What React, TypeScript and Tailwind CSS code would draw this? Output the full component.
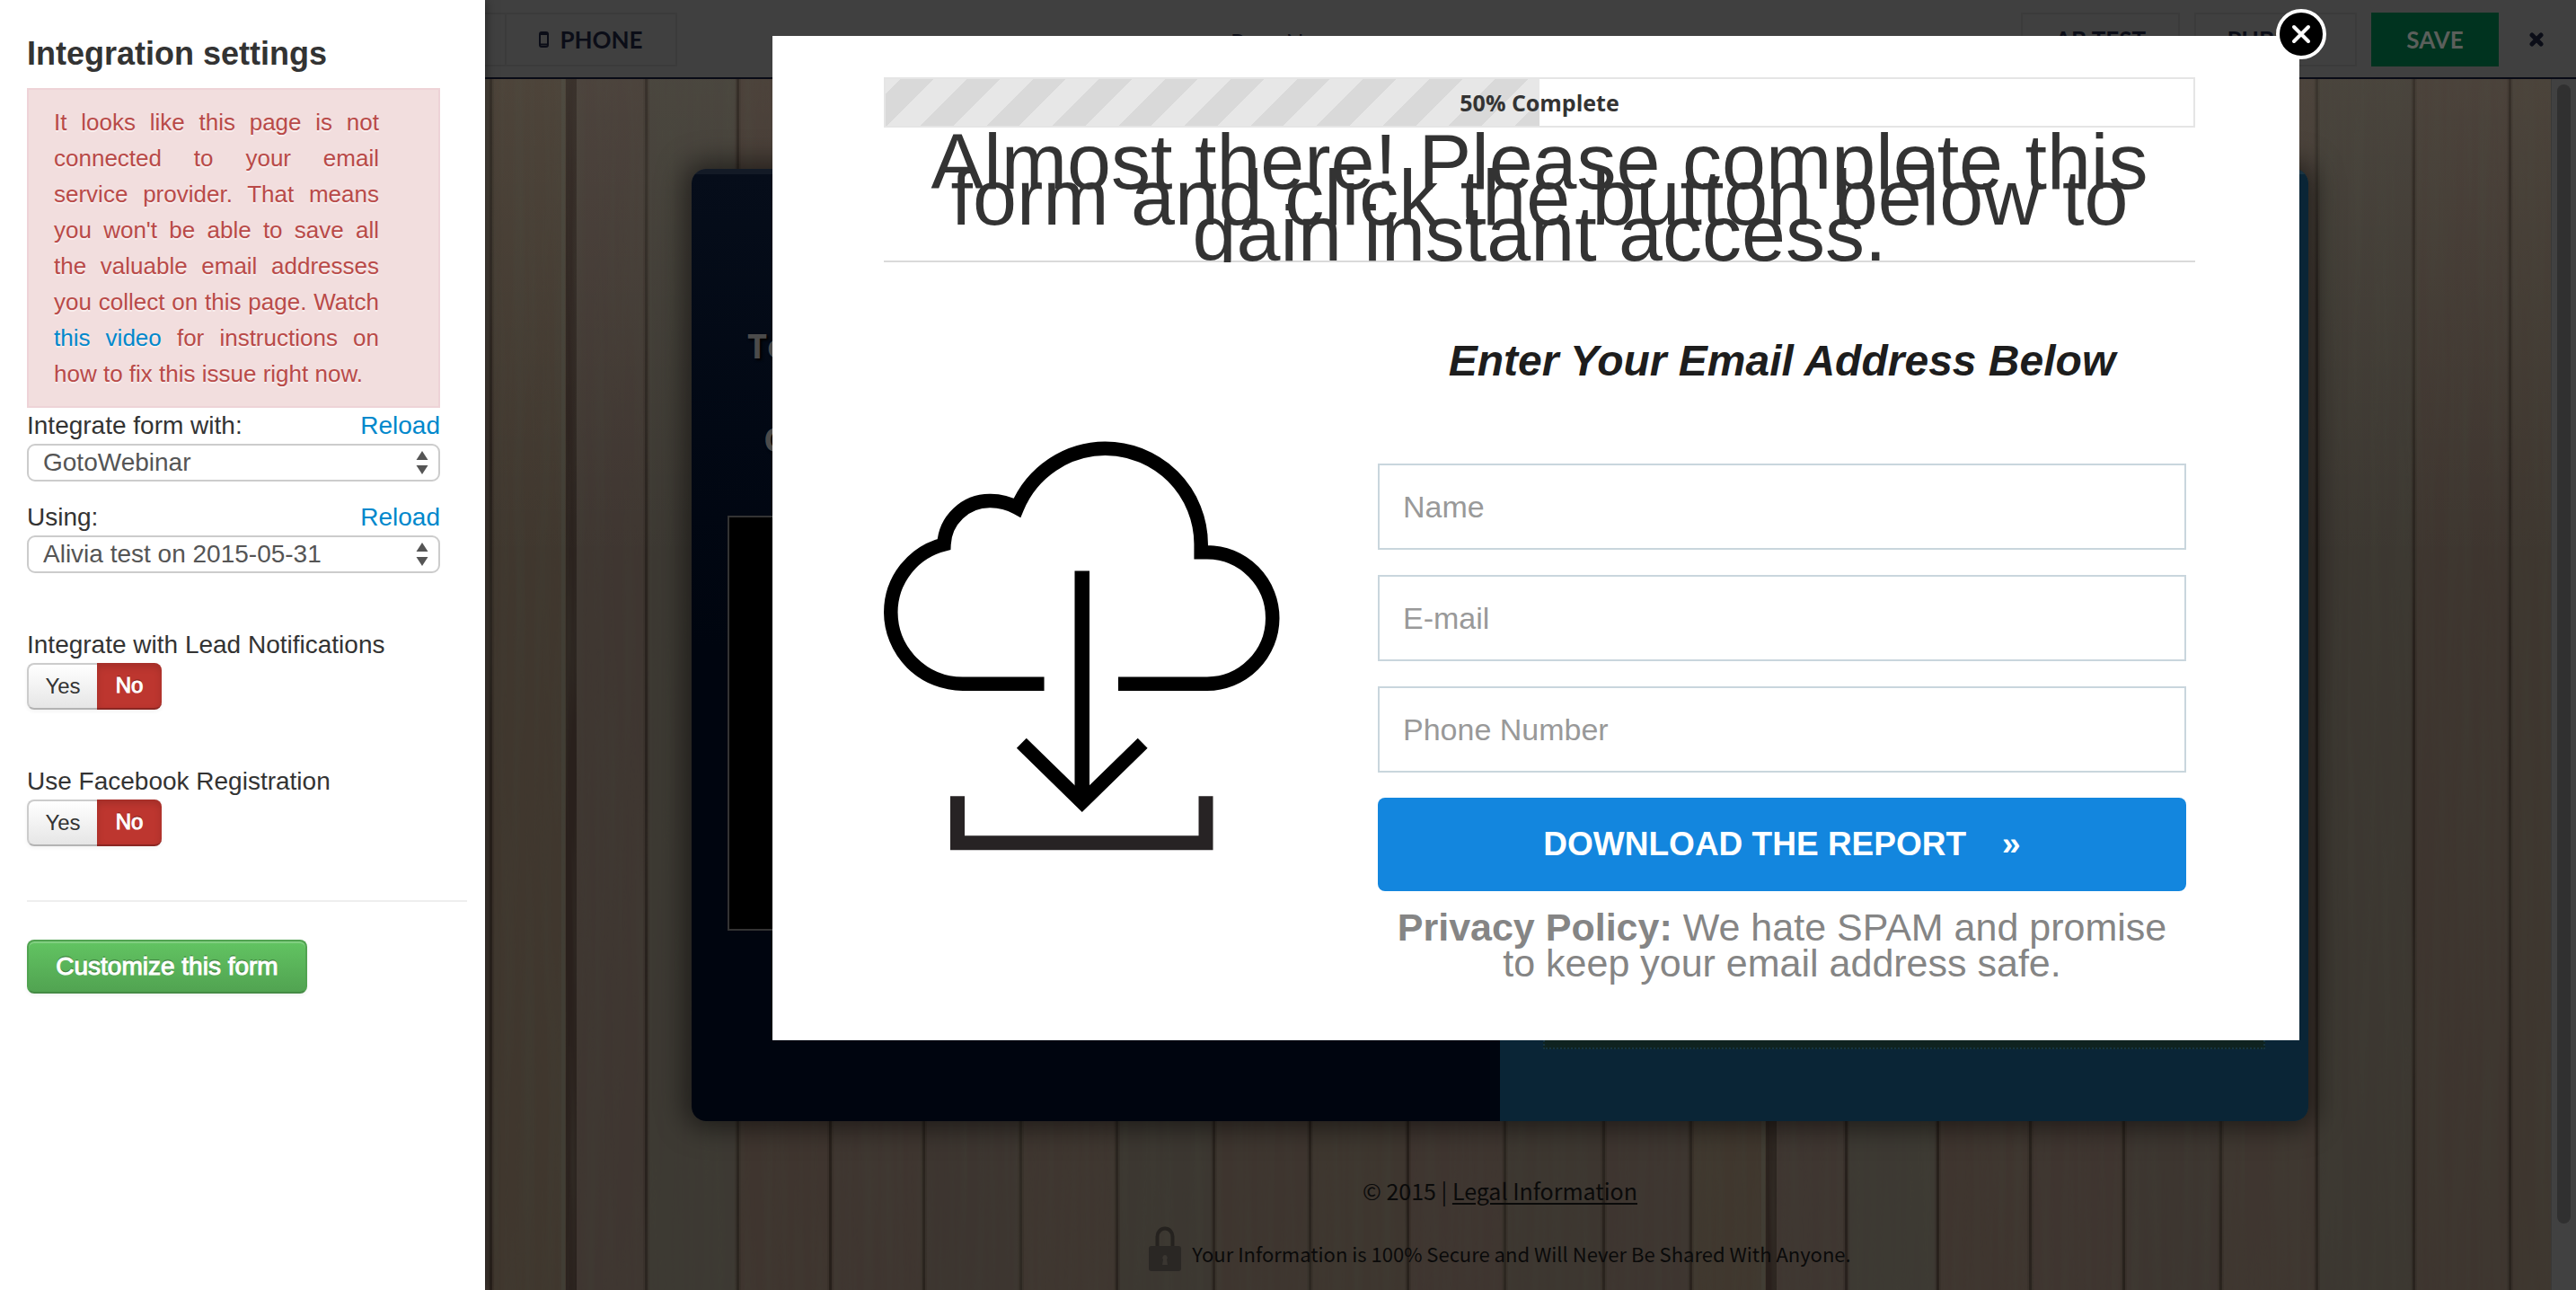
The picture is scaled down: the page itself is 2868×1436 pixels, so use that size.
import React from "react";

const seams = [83, 185, 288, 392, 500, 607, 715, 822, 931, 1039, 1149, 1246];
const planks = [
  { x: 0, w: 83, fill: "#3f3631" },
  { x: 83, w: 102, fill: "#3d3933" },
  { x: 185, w: 103, fill: "#3f352f" },
  { x: 288, w: 104, fill: "#3f3530" },
  { x: 392, w: 108, fill: "#3d3530" },
  { x: 500, w: 107, fill: "#3f3630" },
  { x: 607, w: 108, fill: "#3c3731" },
  { x: 715, w: 107, fill: "#3e352f" },
  { x: 822, w: 109, fill: "#3e362f" },
  { x: 931, w: 108, fill: "#3f3530" },
  { x: 1039, w: 110, fill: "#3d3630" },
  { x: 1149, w: 97, fill: "#3e3530" },
  { x: 1246, w: 90, fill: "#40372e" },
];

function WoodBackdrop() {
  return (
    <svg className="absolute inset-0 size-full" aria-hidden="true">
      <defs>
        <pattern id="planks" x="96" y="0" width="1336" height="1600" patternUnits="userSpaceOnUse">
          {planks.map((p) => (
            <rect key={p.x} x={p.x} y="0" width={p.w} height="1600" fill={p.fill} />
          ))}
          {seams.map((x) => (
            <g key={x}>
              <rect x={x - 3} y="0" width="7" height="1600" fill="#2d2520" opacity="0.35" />
              <rect x={x - 1} y="0" width="3" height="1600" fill="#231c18" opacity="0.8" />
            </g>
          ))}
          <rect x="0" y="0" width="6" height="1600" fill="#29201c" />
          <rect x="1330" y="0" width="6" height="1600" fill="#29201c" />
          <rect x="1325" y="0" width="4" height="1600" fill="#43423b" opacity="0.6" />
        </pattern>
        <filter id="grain" x="0" y="0" width="100%" height="100%" colorInterpolationFilters="sRGB">
          <feTurbulence type="fractalNoise" baseFrequency="0.09 0.003" numOctaves="3" seed="4" />
          <feColorMatrix values="0 0 0 0 0.25  0 0 0 0 0.25  0 0 0 0 0.21  1.6 0 0 0 -0.5" />
        </filter>
        <linearGradient id="topLight" x1="0" y1="0" x2="0" y2="1">
          <stop offset="0" stopColor="#fff0d8" stopOpacity="0.07" />
          <stop offset="0.4" stopColor="#fff0d8" stopOpacity="0" />
        </linearGradient>
      </defs>
      <rect width="100%" height="100%" fill="url(#planks)" />
      <rect width="100%" height="100%" filter="url(#grain)" opacity="0.45" />
      <rect width="100%" height="100%" fill="url(#topLight)" />
    </svg>
  );
}

function SelectField({ id, label, value }: { id: string; label: string; value: string }) {
  return (
    <div>
      <div className="flex justify-between leading-10">
        <label htmlFor={id}>{label}</label>
        <a href="#reload" className="text-[#0088cc]">
          Reload
        </a>
      </div>
      <div className="relative">
        <select
          id={id}
          className="block h-[42px] w-full appearance-none rounded-[9px] border-2 border-[#cccccc] bg-white pl-4 text-[28px] leading-9 text-[#555555]"
        >
          <option>{value}</option>
        </select>
        <svg className="pointer-events-none absolute top-2 right-[13px] h-[26px] w-[14px]" viewBox="0 0 14 26" fill="#555">
          <path d="M7 0l6.5 10h-13zM7 26l6.5-10h-13z" />
        </svg>
      </div>
    </div>
  );
}

function YesNo({ label }: { label: string }) {
  return (
    <div className="mt-[60px]" role="group" aria-label={label}>
      <div className="leading-10">{label}</div>
      <div className="flex h-[52px] w-[150px] rounded-lg text-[24px] shadow-[0_2px_4px_rgba(0,0,0,0.05)]">
        <button className="w-[78px] rounded-l-lg border-2 border-r-0 border-[#cccccc] border-b-[#b3b3b3] bg-linear-to-b from-white to-[#e6e6e6]">
          Yes
        </button>
        <button className="flex-1 rounded-r-lg border-b-2 border-[#8a2622] bg-[#bd362f] text-white shadow-[inset_0_4px_8px_rgba(0,0,0,0.15)] text-shadow-[0_-2px_0_rgba(0,0,0,0.25)] [-webkit-text-stroke:1px_white]">
          No
        </button>
      </div>
    </div>
  );
}

function Sidebar() {
  return (
    <aside className="relative z-30 min-h-screen w-[540px] shrink-0 bg-white pt-10 pl-[30px] text-[28px] text-[#333333] shadow-[0_0_12px_rgba(0,0,0,0.5)]">
      <div className="mr-[50px]">
        <h1 className="text-[36px] leading-10 font-bold">Integration settings</h1>
        <p className="mt-[18px] border-2 border-[#eed3d7] bg-[#f2dede] py-4 pr-[66px] pl-7 text-justify text-[26px] leading-10 text-[#b94a48] text-shadow-[0_2px_0_rgba(255,255,255,0.5)]">
          It looks like this page is not connected to your email service provider. That means you won't be able to save
          all the valuable email addresses you collect on this page. Watch{" "}
          <a href="#video" className="text-[#0088cc]">
            this video
          </a>{" "}
          for instructions on how to fix this issue right now.
        </p>
        <div className="flex flex-col gap-5">
          <SelectField id="service" label="Integrate form with:" value="GotoWebinar" />
          <SelectField id="webinar" label="Using:" value="Alivia test on 2015-05-31" />
        </div>
        <YesNo label="Integrate with Lead Notifications" />
        <YesNo label="Use Facebook Registration" />
      </div>
      <hr className="mt-[60px] mr-5 border-t-2 border-[#eeeeee]" />
      <button className="mt-[42px] h-[60px] w-[312px] rounded-lg border-2 border-[#51a351] border-b-[#458b45] bg-linear-to-b from-[#62c462] to-[#51a351] text-[28px] text-white shadow-[inset_0_2px_0_rgba(255,255,255,0.2),0_2px_4px_rgba(0,0,0,0.05)] text-shadow-[0_-2px_0_rgba(0,0,0,0.25)] [-webkit-text-stroke:1px_white]">
        Customize this form
      </button>
    </aside>
  );
}

function Toolbar() {
  return (
    <header className="relative flex h-[88px] items-start justify-between border-b-2 border-[#090b16] bg-[#404040] pt-[14px] pr-9 font-['Lato',sans-serif] text-[26px] font-bold text-[#0b0d17]">
      <div className="flex">
        <div className="h-[60px] w-6 border-y-2 border-r-2 border-[#3b3b3b]" />
        <button className="flex h-[60px] w-[190px] items-center justify-center gap-3 border-y-2 border-r-2 border-[#3b3b3b]">
          <svg className="h-[18px] w-[11px]" viewBox="0 0 11 18" fill="none">
            <rect x="1" y="1" width="9" height="16" rx="2" stroke="#0b0d17" strokeWidth="2" />
            <path d="M1 3h9M1 14.500h9" stroke="#0b0d17" strokeWidth="2" />
          </svg>
          PHONE
        </button>
      </div>
      <span className="absolute top-[30px] left-[830px] text-[26px] leading-9 font-normal">Page Name</span>
      <div className="flex items-center gap-4">
        <button className="h-[60px] w-[177px] border-2 border-[#3b3b3b]">AB TEST</button>
        <button className="h-[60px] w-[181px] border-2 border-[#3b3b3b]">PUBLISH</button>
        <button className="h-[60px] w-[142px] bg-[#00331f] text-[#5b5f5b]">SAVE</button>
        <button aria-label="Close editor" className="ml-[18px]">
          <svg className="h-4 w-4" viewBox="0 0 16 16">
            <path d="M3 3l10 10M13 3L3 13" stroke="#0b0d17" strokeWidth="5" strokeLinecap="round" />
          </svg>
        </button>
      </div>
    </header>
  );
}

function LandingPage() {
  return (
    <div className="relative flex-1 overflow-hidden bg-[#3e3730]">
      <WoodBackdrop />
      <div className="relative pt-[100px] pr-10">
        <div className="mx-auto flex h-[1060px] w-[1800px] overflow-hidden rounded-2xl shadow-[0_0_30px_8px_rgba(0,0,0,0.5)]">
          <div className="h-full w-1/2 border-t-6 border-[#131a26] bg-linear-to-b from-[#060d1a] to-[#00050f] to-50% px-10 font-['Open_Sans',sans-serif] text-[38px] font-bold text-[#4b4b4b]">
            <p className="mt-[166px] ml-[22px] leading-12 text-shadow-[2px_2px_3px_black]">To Get Instant Access</p>
            <p className="mt-14 ml-10 leading-12 text-shadow-[2px_2px_3px_black]">Complete The Form</p>
            <div className="mt-[62px] h-[462px] border-2 border-[#333333] bg-black" />
          </div>
          <div className="flex h-full w-1/2 flex-col border-t-6 border-[#1b3442] bg-[#0a2536] px-12">
            <div className="mt-[700px] h-[274px] border-2 border-dotted border-[#153341] bg-[#0f2320]" />
          </div>
        </div>
        <footer className="mt-[57px] flex flex-col items-center font-['Noto_Sans_CJK_SC',sans-serif] text-[25px] text-[#0a0a0a]">
          <p className="leading-10">
            © 2015 |{" "}
            <a href="#legal" className="underline decoration-2 underline-offset-3">
              Legal Information
            </a>
          </p>
          <p className="mt-5 flex h-[50px] items-start gap-3 text-[22px] leading-[60px]">
            <svg className="h-[50px] w-9" viewBox="0 0 36 50" aria-hidden="true">
              <path d="M9.500 24V11.500a8.500 9 0 0 1 17 0V24" fill="none" stroke="#25221f" strokeWidth="4" />
              <rect y="22" width="36" height="28" rx="3" fill="#2a2724" />
              <path d="M18 32a3 3 0 0 1 2 5l1 6h-6l1-6a3 3 0 0 1 2-5z" fill="#3a3631" />
            </svg>
            Your Information is 100% Secure and Will Never Be Shared With Anyone.
          </p>
        </footer>
      </div>
    </div>
  );
}

function CloudDownload() {
  return (
    <svg className="mt-[199px] h-[456px] w-full" viewBox="503 394 909 940" role="img" aria-label="Download">
      <g fill="none" stroke="#000" strokeWidth="32">
        <path d="M871 951H684A165 165 0 0 1 519 787A161 161 0 0 1 641 631A105 105 0 0 1 746 531A125 125 0 0 1 809 547A220 220 0 0 1 1011 411A220 220 0 0 1 1231 630V649H1245A151 151 0 0 1 1395 801A151 151 0 0 1 1245 951H1041" />
        <path d="M958 692V1222" strokeWidth="34" />
        <path d="M819 1087L958 1223L1097 1087" />
      </g>
      <path d="M672 1209V1316H1242V1209" fill="none" stroke="#272324" strokeWidth="33" />
    </svg>
  );
}

function OptInModal() {
  const fields = [
    { placeholder: "Name", type: "text" },
    { placeholder: "E-mail", type: "email" },
    { placeholder: "Phone Number", type: "tel" },
  ];
  return (
    <div
      role="dialog"
      aria-label="Opt-in form"
      className="relative flex-1 border-t-2 border-white bg-white pt-11 pr-[116px] pb-[66px] pl-[124px]"
    >
      <button
        aria-label="Close"
        className="absolute -top-8 -right-[30px] flex size-14 items-center justify-center rounded-full border-4 border-white bg-black"
      >
        <svg className="size-[22px]" viewBox="0 0 22 22">
          <path d="M3 3l16 16M19 3L3 19" stroke="#fff" strokeWidth="4" strokeLinecap="round" />
        </svg>
      </button>
      <div className="relative h-14 border-2 border-[#e5e5e5] bg-white">
        <div className="h-full w-1/2 bg-[repeating-linear-gradient(135deg,#e7e7e7_0_12px,#d9d9d9_12px_38px,#e7e7e7_38px_52px)]" />
        <span className="absolute inset-0 text-center font-['Open_Sans',sans-serif] text-[25px] leading-13 font-bold text-[#333333]">
          50% Complete
        </span>
      </div>
      <div className="h-[150px] overflow-y-hidden shadow-[inset_0_-2px_0_#dadada]">
        <h2 className="px-6 pt-[18px] text-center text-[88px] leading-10 text-[#333333]">
          Almost there! Please complete this form and click the button below to gain instant access.
        </h2>
      </div>
      <div className="grid grid-cols-[441px_1fr] gap-[109px] pr-[10px]">
        <CloudDownload />
        <form className="pt-[82px]">
          <h3 className="text-center text-[48px] leading-14 font-bold text-[#1d1d1d] italic">
            Enter Your Email Address Below
          </h3>
          <div className="mt-[86px] flex flex-col gap-7">
            {fields.map((f) => (
              <input
                key={f.placeholder}
                type={f.type}
                placeholder={f.placeholder}
                aria-label={f.placeholder}
                className="h-24 w-full border-2 border-[#c9d6dd] bg-white px-[26px] text-[34px] placeholder:text-[#999999]"
              />
            ))}
            <button
              type="button"
              className="flex h-[104px] items-center justify-center gap-10 rounded-lg bg-[#1386de] text-[37px] font-bold text-white"
            >
              <span>DOWNLOAD THE REPORT</span>
              <span>»</span>
            </button>
          </div>
          <p className="mt-5 px-5 text-center text-[43px] leading-10 text-[#858585]">
            <strong>Privacy Policy:</strong> We hate SPAM and promise to keep your email address safe.
          </p>
        </form>
      </div>
    </div>
  );
}

export default function App() {
  return (
    <div className="flex min-h-screen bg-[#404040] font-['Liberation_Sans',Arial,sans-serif]">
      <Sidebar />
      <main className="relative flex h-screen min-w-0 flex-1 flex-col overflow-hidden">
        <Toolbar />
        <div className="flex min-h-0 flex-1">
          <LandingPage />
          <div className="w-7 border-l border-[#383838] bg-[#414141] px-[6px] pt-[6px]">
            <div className="h-[1268px] rounded-full bg-[#303030]" />
          </div>
        </div>
        <div className="absolute inset-0 z-20 flex items-start pt-10 pr-[308px] pl-[320px]">
          <OptInModal />
        </div>
      </main>
    </div>
  );
}
